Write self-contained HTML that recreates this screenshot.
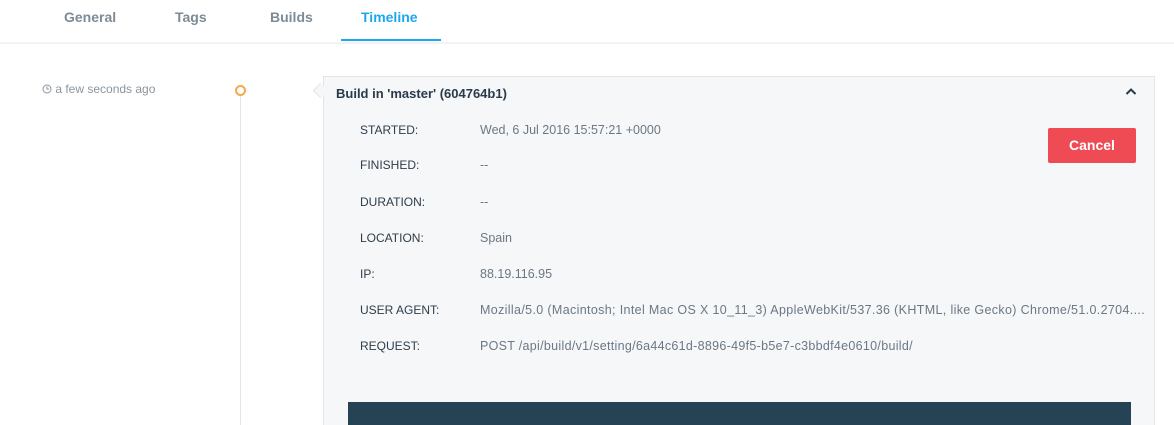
<!DOCTYPE html>
<html><head><style>
html,body{margin:0;width:1174px;height:425px;overflow:hidden}
body{background:#fff;font-family:"Liberation Sans",sans-serif;position:relative}
.tabs{position:absolute;left:0;top:0;width:1174px;height:42px;border-bottom:2px solid #f1f3f5}
.tab{position:absolute;top:9px;font-size:14px;font-weight:bold;color:#7d8b96}
.tab.on{color:#1ea7f0}
.ul{position:absolute;left:341px;top:39px;width:100px;height:2px;background:#1ea7f0}
.time{position:absolute;left:42px;top:82px;font-size:12px;color:#8a959e}
.line{position:absolute;left:240px;top:96px;width:1px;height:329px;background:#e3e6e9}
.dot{position:absolute;left:235px;top:85px;width:7px;height:7px;border:2px solid #f5a94a;border-radius:50%;background:#fff}
.card{position:absolute;left:323px;top:76px;width:832px;height:349px;background:#f5f7f9;border:1px solid #e1e5e9;border-bottom:none;box-sizing:border-box}
.arrow{position:absolute;left:315px;top:85px;width:10px;height:10px;background:#f5f7f9;border-left:1px solid #e1e5e9;border-bottom:1px solid #e1e5e9;transform:rotate(45deg)}
.title{position:absolute;left:336px;top:86px;font-size:13px;font-weight:bold;color:#2a3a48}
.lab{position:absolute;left:360px;font-size:12px;color:#2e3d4a}
.val{position:absolute;left:480px;font-size:12.5px;color:#6b7884;white-space:nowrap}
.btn{position:absolute;left:1048px;top:128px;width:88px;height:35px;background:#ef4b55;border-radius:2px;color:#fff;font-weight:bold;font-size:14px;text-align:center;line-height:35px}
.dark{position:absolute;left:348px;top:402px;width:783px;height:23px;background:#264356}
</style></head><body>
<div class="tabs"></div>
<div class="tab" style="left:64px">General</div>
<div class="tab" style="left:175px">Tags</div>
<div class="tab" style="left:270px">Builds</div>
<div class="tab on" style="left:361px">Timeline</div>
<div class="ul"></div>
<div class="time"><svg width="10" height="10" viewBox="0 0 10 10" style="vertical-align:-1px"><circle cx="5" cy="5" r="4" fill="none" stroke="#8a959e" stroke-width="1"/><path d="M5 2.5V5H7" fill="none" stroke="#8a959e"/></svg> a few seconds ago</div>
<div class="line"></div>
<div class="dot"></div>
<div class="card"></div>
<div class="arrow"></div>
<div class="title">Build in 'master' (604764b1)</div>
<svg style="position:absolute;left:1125px;top:87px" width="12" height="9" viewBox="0 0 12 9"><path d="M1.5 7L6 2.5 10.5 7" fill="none" stroke="#2a3a48" stroke-width="2"/></svg>
<div class="lab" style="top:123px">STARTED:</div><div class="val" style="top:123px">Wed, 6 Jul 2016 15:57:21 +0000</div>
<div class="lab" style="top:158px">FINISHED:</div><div class="val" style="top:158px">--</div>
<div class="lab" style="top:195px">DURATION:</div><div class="val" style="top:195px">--</div>
<div class="lab" style="top:231px">LOCATION:</div><div class="val" style="top:231px">Spain</div>
<div class="lab" style="top:267px">IP:</div><div class="val" style="top:267px">88.19.116.95</div>
<div class="lab" style="top:303px">USER AGENT:</div><div class="val" style="top:303px;letter-spacing:0.35px">Mozilla/5.0 (Macintosh; Intel Mac OS X 10_11_3) AppleWebKit/537.36 (KHTML, like Gecko) Chrome/51.0.2704....</div>
<div class="lab" style="top:339px">REQUEST:</div><div class="val" style="top:339px;letter-spacing:0.3px">POST /api/build/v1/setting/6a44c61d-8896-49f5-b5e7-c3bbdf4e0610/build/</div>
<div class="btn">Cancel</div>
<div class="dark"></div>
</body></html>
